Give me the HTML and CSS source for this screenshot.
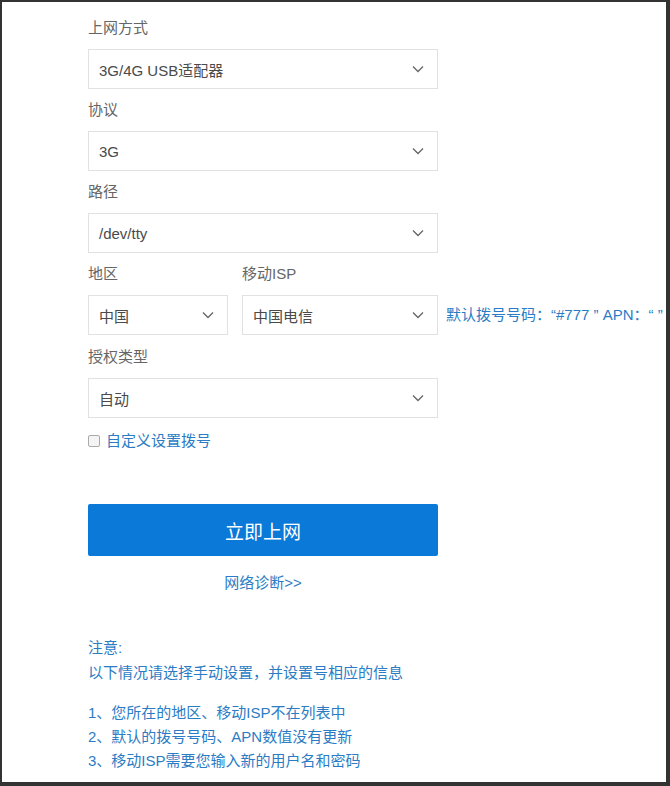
FILE: index.html
```html
<!DOCTYPE html>
<html lang="zh-CN">
<head>
<meta charset="utf-8">
<title>上网设置</title>
<link rel="stylesheet" href="styles.css">
</head>
<body>
<div class="frame">
  <div class="form">
    <div class="label">上网方式</div>
    <div class="select"><span>3G/4G USB适配器</span><svg class="chev" width="12" height="8" viewBox="0 0 12 8"><path d="M1 1.5 L6 6.5 L11 1.5" fill="none" stroke="#666" stroke-width="1.3"/></svg></div>

    <div class="label">协议</div>
    <div class="select"><span>3G</span><svg class="chev" width="12" height="8" viewBox="0 0 12 8"><path d="M1 1.5 L6 6.5 L11 1.5" fill="none" stroke="#666" stroke-width="1.3"/></svg></div>

    <div class="label">路径</div>
    <div class="select"><span>/dev/tty</span><svg class="chev" width="12" height="8" viewBox="0 0 12 8"><path d="M1 1.5 L6 6.5 L11 1.5" fill="none" stroke="#666" stroke-width="1.3"/></svg></div>

    <div class="row">
      <div class="col col-region">
        <div class="label">地区</div>
        <div class="select"><span>中国</span><svg class="chev" width="12" height="8" viewBox="0 0 12 8"><path d="M1 1.5 L6 6.5 L11 1.5" fill="none" stroke="#666" stroke-width="1.3"/></svg></div>
      </div>
      <div class="col col-isp">
        <div class="label">移动ISP</div>
        <div class="select"><span>中国电信</span><svg class="chev" width="12" height="8" viewBox="0 0 12 8"><path d="M1 1.5 L6 6.5 L11 1.5" fill="none" stroke="#666" stroke-width="1.3"/></svg></div>
      </div>
      <div class="hint">默认拨号号码：“#777 ” APN：“ ”</div>
    </div>

    <div class="label label-auth">授权类型</div>
    <div class="select"><span>自动</span><svg class="chev" width="12" height="8" viewBox="0 0 12 8"><path d="M1 1.5 L6 6.5 L11 1.5" fill="none" stroke="#666" stroke-width="1.3"/></svg></div>

    <label class="check"><span class="box"></span><span class="check-text">自定义设置拨号</span></label>

    <div class="btn">立即上网</div>
    <div class="diag">网络诊断&gt;&gt;</div>

    <div class="note">
      <div>注意:</div>
      <div>以下情况请选择手动设置，并设置号相应的信息</div>
    </div>
    <div class="note list">
      <div>1、您所在的地区、移动ISP不在列表中</div>
      <div>2、默认的拨号号码、APN数值没有更新</div>
      <div>3、移动ISP需要您输入新的用户名和密码</div>
    </div>
  </div>
</div>
</body>
</html>
```

FILE: styles.css
```css
html, body {
  margin: 0;
  padding: 0;
  background: #fff;
}
body {
  font-family: "Liberation Sans", "Noto Sans CJK SC", sans-serif;
  font-size: 15px;
}
.frame {
  width: 670px;
  height: 786px;
  box-sizing: border-box;
  border-style: solid;
  border-color: #333;
  border-width: 2px 4px 4px 2px;
  overflow: hidden;
  background: #fff;
}
.form {
  width: 350px;
  margin-left: 86px;
  padding-top: 16px;
}
.label {
  color: #666;
  line-height: 20px;
  height: 20px;
  margin-bottom: 11px;
  white-space: nowrap;
}
.label-auth {
  margin-top: 1px;
}
.select {
  box-sizing: border-box;
  height: 40px;
  border: 1px solid #e1e1e1;
  display: flex;
  align-items: center;
  justify-content: space-between;
  padding: 0 13px 0 10px;
  color: #4a4a4a;
  margin-bottom: 11px;
  white-space: nowrap;
}
.chev {
  display: block;
}
.row {
  display: flex;
  align-items: flex-end;
  white-space: nowrap;
  margin-top: 1px;
}
.col-region {
  width: 140px;
  flex: none;
}
.col-isp {
  width: 196px;
  margin-left: 14px;
  flex: none;
}
.hint {
  color: #2b7cc4;
  line-height: 40px;
  margin-left: 8px;
  margin-bottom: 11px;
  flex: none;
}
.check {
  display: flex;
  align-items: center;
  height: 20px;
  margin-top: 13px;
}
.box {
  width: 10px;
  height: 10px;
  border: 1px solid #aaa;
  border-radius: 2px;
  background: #f4f4f4;
  margin-right: 6px;
}
.check-text {
  color: #2b7cc4;
  line-height: 20px;
}
.btn {
  margin-top: 53px;
  height: 52px;
  background: #0a79d8;
  border-radius: 2px;
  color: #fff;
  font-size: 19px;
  display: flex;
  align-items: center;
  justify-content: center;
}
.diag {
  margin-top: 17px;
  text-align: center;
  color: #2b7cc4;
  line-height: 20px;
  font-size: 15px;
}
.note {
  margin-top: 42px;
  color: #2b7cc4;
  line-height: 25px;
  white-space: nowrap;
}
.note.list {
  margin-top: 16px;
  line-height: 24px;
}
```
